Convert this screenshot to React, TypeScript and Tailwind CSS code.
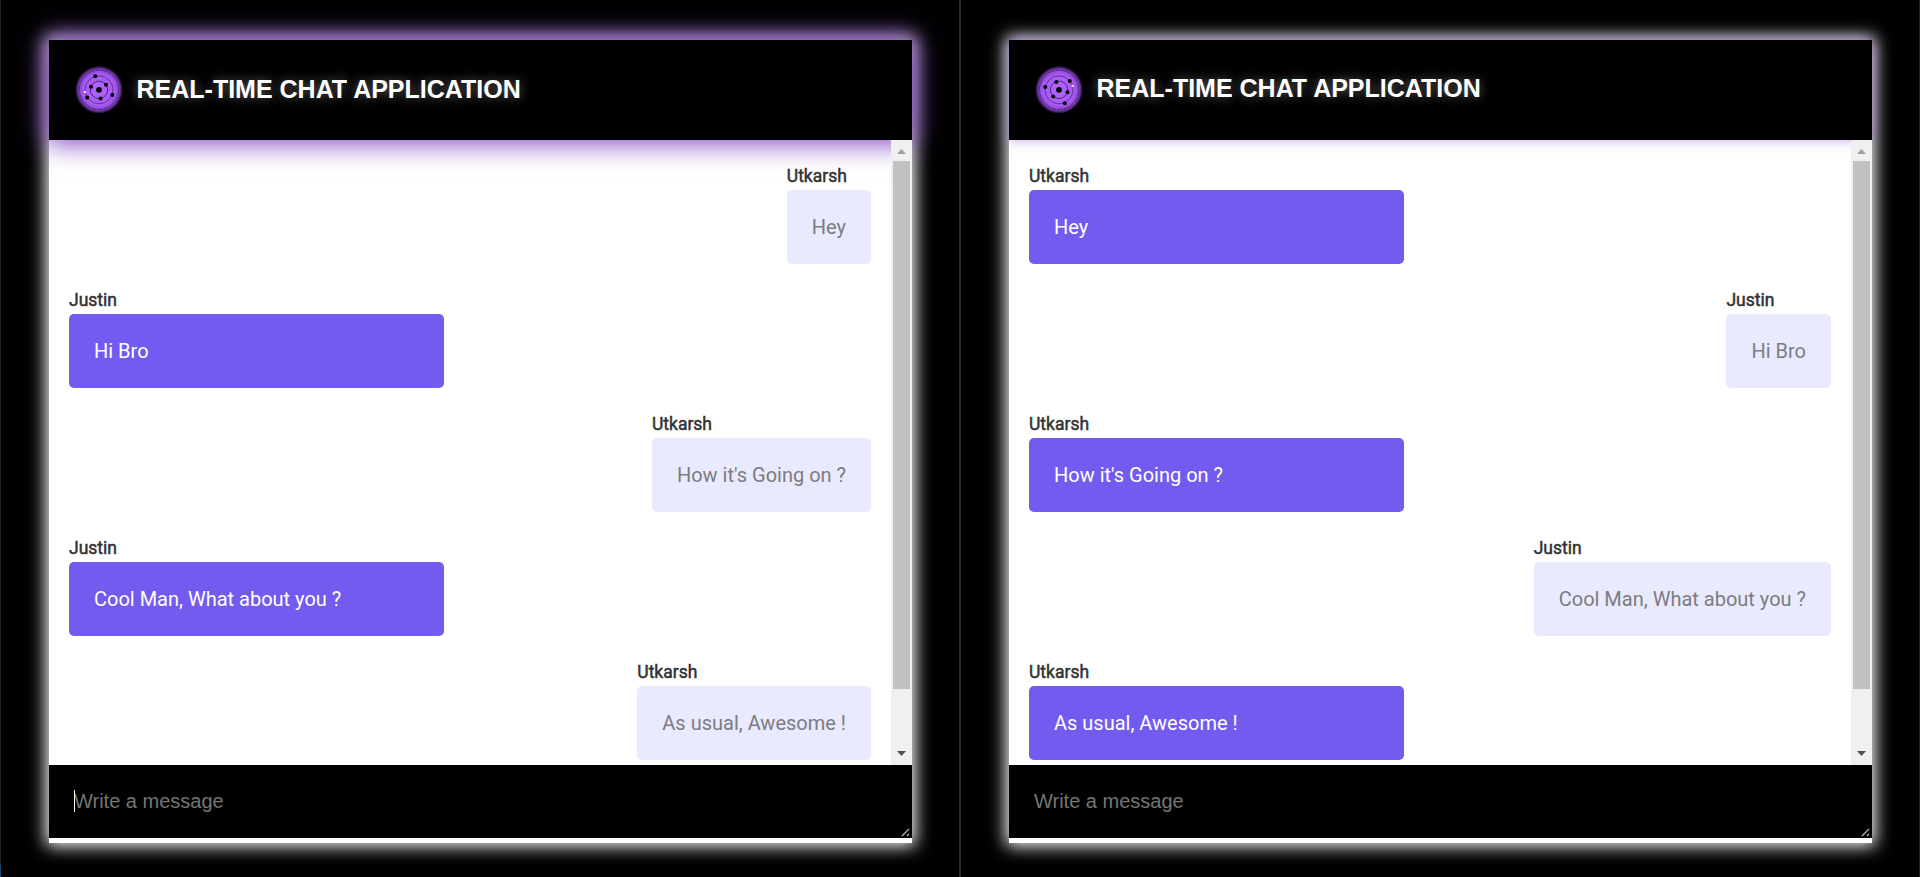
type Message = { user: string; text: string };

const messages: Message[] = [
  { user: "Utkarsh", text: "Hey" },
  { user: "Justin", text: "Hi Bro" },
  { user: "Utkarsh", text: "How it's Going on ?" },
  { user: "Justin", text: "Cool Man, What about you ?" },
  { user: "Utkarsh", text: "As usual, Awesome !" },
];

type Dot = [number, number];

function Logo({ dots, spark }: { dots: Dot[]; spark: Dot }) {
  return (
    <svg width="50" height="50" viewBox="0 0 50 50" className="shrink-0">
      <defs>
        <radialGradient id="orb">
          <stop offset="0" stopColor="#b464ff" />
          <stop offset="0.65" stopColor="#a65bf3" />
          <stop offset="0.82" stopColor="#8a48ce" />
          <stop offset="0.92" stopColor="#4a2472" />
          <stop offset="1" stopColor="#000" />
        </radialGradient>
      </defs>
      <circle cx="25" cy="24.8" r="24" fill="url(#orb)" />
      <g fill="none" stroke="#35165c">
        <circle cx="25" cy="24.8" r="8.7" strokeWidth="0.8" />
        <circle cx="25" cy="24.8" r="14" strokeWidth="0.6" />
        <circle cx="25" cy="24.8" r="19.6" strokeWidth="0.9" strokeDasharray="1.6 0.8" />
      </g>
      <circle cx="25" cy="24.8" r="2.9" />
      {dots.map(([x, y]) => (
        <circle key={`${x}-${y}`} cx={x} cy={y} r="2" />
      ))}
      <rect x={spark[0] - 1} y={spark[1] - 1} width="2" height="2" fill="#f0e0ff" />
    </svg>
  );
}

function Bubble({ message, own }: { message: Message; own: boolean }) {
  return (
    <div className={own ? "self-end" : "w-[375px] self-start"}>
      <h4 className="mb-[3px] h-[21px] text-[17.5px] leading-[21px] font-normal text-[#333] [-webkit-text-stroke:0.5px_#333]">
        {message.user}
      </h4>
      <p
        className={
          own
            ? "h-[74px] rounded-[5px] bg-[#e9eafd] px-[25px] text-[20px] leading-[74px] text-[#7c7c82]"
            : "h-[74px] rounded-[5px] bg-[#735bef] px-[25px] text-[20px] leading-[74px] text-white"
        }
      >
        {message.text}
      </p>
    </div>
  );
}

function Scrollbar() {
  return (
    <div className="flex w-[21px] shrink-0 flex-col items-center bg-[#f0f0f0]">
      <svg width="21" height="21" viewBox="0 0 21 21" className="shrink-0">
        <path d="M6 14 L10.5 9 L15 14 Z" fill="#a0a0a0" />
      </svg>
      <div className="h-[528px] w-[17px] bg-[#c1c1c1]" />
      <svg width="21" height="21" viewBox="0 0 21 21" className="mt-auto shrink-0">
        <path d="M6 7 L10.5 12 L15 7 Z" fill="#505050" />
      </svg>
    </div>
  );
}

type ChatProps = {
  me: string;
  glow: string;
  dots: Dot[];
  spark: Dot;
  titleClass: string;
  focused?: boolean;
};

function Chat({ me, glow, dots, spark, titleClass, focused }: ChatProps) {
  return (
    <section className="flex h-[803px] w-[863px] flex-col bg-white shadow-[0_0_16px_3px_#fff]">
      <header className={`flex h-[100px] shrink-0 items-center bg-black pl-[25px] ${glow}`}>
        <Logo dots={dots} spark={spark} />
        <h1
          className={`ml-[12.5px] font-['Liberation_Sans',sans-serif] text-[25px] leading-[30px] font-bold whitespace-nowrap text-white [text-shadow:0_0_12px_rgba(255,255,255,0.4)] ${titleClass}`}
        >
          REAL-TIME CHAT APPLICATION
        </h1>
      </header>
      <div className="flex h-[625px] shrink-0">
        <div className="flex min-w-0 flex-1 flex-col gap-[26px] overflow-hidden px-5 pt-[26px]">
          {messages.map((message) => (
            <Bubble key={message.text} message={message} own={message.user === me} />
          ))}
        </div>
        <Scrollbar />
      </div>
      <div className="relative flex h-[73px] shrink-0 bg-black">
        <textarea
          placeholder="Write a message"
          className="h-full w-full resize-none overflow-hidden bg-black px-[25px] py-[25px] font-['Liberation_Sans',sans-serif] text-[20px] leading-[23px] text-white outline-none placeholder:text-[#757575]"
        />
        {focused && <span className="absolute top-[25px] left-[25px] h-[22px] w-px bg-white" />}
        <svg width="9" height="9" viewBox="0 0 9 9" className="absolute right-[2px] bottom-px">
          <path d="M1 8 L8 1 M6 8 L8 6" stroke="#b0b0b0" strokeWidth="1.3" />
        </svg>
      </div>
    </section>
  );
}

export default function App() {
  return (
    <main className="flex h-[877px] w-[1920px] overflow-hidden bg-black font-[Roboto,sans-serif]">
      <div className="flex w-px flex-col bg-[#222]">
        <div className="mt-auto h-3 bg-[#1a4a75]" />
      </div>
      <div className="flex w-[958px] justify-start overflow-hidden pt-10 pl-12">
        <Chat
          me="Utkarsh"
          glow="shadow-[0_0_26px_3px_rgb(127,63,191)]"
          dots={[[21.3, 11.3], [32, 19.7], [17, 21.7], [38.3, 30], [26.5, 33.5], [13.2, 32.5]]}
          spark={[11, 27]}
          titleClass="pb-[3px]"
          focused
        />
      </div>
      <div className="w-0.5 bg-[#2a2a2a]" />
      <div className="flex w-[958px] justify-start overflow-hidden pt-10 pl-12">
        <Chat
          me="Justin"
          glow="shadow-[0_0_11px_0_rgba(157,99,214,0.6)]"
          dots={[[22.3, 17], [35.7, 16], [11.3, 22], [33.5, 27.2], [19.2, 31.5], [30.8, 38.3]]}
          spark={[38.7, 21]}
          titleClass="pb-[4px]"
        />
      </div>
      <div className="w-px bg-[#222]" />
    </main>
  );
}
